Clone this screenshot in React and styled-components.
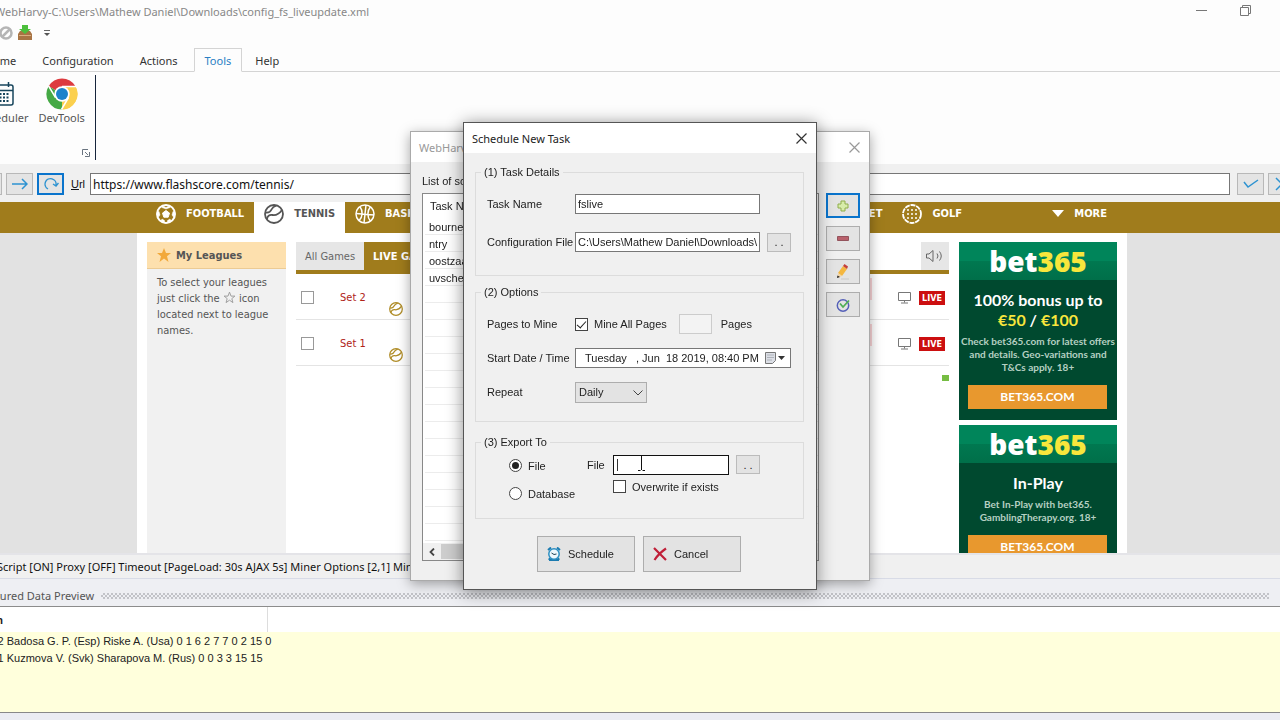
import React from 'react';
import styled, { createGlobalStyle, css } from 'styled-components';

const SEGOE = '"Noto Sans", "Open Sans", sans-serif';
const SYSTEM = '"Liberation Sans", Arial, sans-serif';
const SITE = '"DejaVu Sans Condensed", "DejaVu Sans", sans-serif';
const AD = 'Lato, "Open Sans", sans-serif';

const TABS = ['Home', 'Configuration', 'Actions', 'Tools', 'Help'];
const TASKS = ['bournemouth', 'ntry', 'oostzaan', 'uvscheduled'];
const MATCHES = ['Set 2', 'Set 1'];
const CAPTURED = [
  'Set 2 Badosa G. P. (Esp) Riske A. (Usa) 0 1 6 2 7 7 0 2 15 0',
  'Set 1 Kuzmova V. (Svk) Sharapova M. (Rus) 0 0 3 3 15 15',
];

const CloseIcon = ({ color }) => (
  <svg width="11" height="11" viewBox="0 0 11 11">
    <path d="M.5.5l10 10M10.500.5l-10 10" stroke={color} strokeWidth="1.200" fill="none" />
  </svg>
);

const TennisIcon = ({ size }) => (
  <svg width={size} height={size} viewBox="0 0 20 20" fill="none" stroke="currentColor" strokeWidth="1.800">
    <circle cx="10" cy="10" r="9" />
    <path d="M1.500 8.500C4.500 9 6.500 7.800 7.500 5.500S9.500 2.500 12.500 1.500" />
    <path d="M3 15.500c0-3.500 2.500-5 5.500-4.500 4.500.7 7-1.500 9.500-5" />
  </svg>
);

const FootballIcon = () => (
  <svg width="20" height="20" viewBox="0 0 20 20" fill="none" stroke="currentColor">
    <circle cx="10" cy="10" r="9" strokeWidth="2" />
    <path d="M10 6.500l3.500 2.600-1.300 4.100H7.800L6.500 9.100z" fill="currentColor" />
    <path d="M6 1.500L10 3.600l4-2.100v2L10 5 6 3.500zM1 8l2-.5 1 3.500-1.500 2zM19 8l-2-.5-1 3.500 1.500 2zM5 17l1-2 2.500 1.500V19zM15 17l-1-2-2.500 1.500V19z" fill="currentColor" strokeWidth=".5" />
  </svg>
);

const BasketIcon = () => (
  <svg width="20" height="20" viewBox="0 0 20 20" fill="none" stroke="currentColor" strokeWidth="1.500">
    <circle cx="10" cy="10" r="9" />
    <path d="M11 1L9 19M1 9.500l18 1.500M5 2.800c3 4 3 10-1 14M15.500 2.800c-3.500 4-3.500 10.500 0 14.400" />
  </svg>
);

const GolfIcon = () => (
  <svg width="20" height="20" viewBox="0 0 20 20">
    <circle cx="10" cy="10" r="9" fill="none" stroke="currentColor" strokeWidth="1.800" strokeDasharray="5 .8" />
    {[6, 10, 14].map(y => [6, 10, 14].map(x => (
      <circle key={`${x}-${y}`} cx={x} cy={y} r="1" fill="currentColor" />
    )))}
  </svg>
);

const ChromeIcon = () => (
  <svg width="32" height="32" viewBox="0 0 32 32">
    <path d="M16 16L2.600 8.200A15.500 15.500 0 0 1 29.400 8.200z" fill="#dd3b3f" />
    <path d="M16 16L29.400 8.200A15.500 15.500 0 0 1 16 31.500z" fill="#fbd04e" />
    <path d="M16 16V31.500A15.500 15.500 0 0 1 2.600 8.200z" fill="#45a945" />
    <path d="M16 8.500h13.500A15.500 15.500 0 0 1 16 31.500l6.500-12z" fill="#fbd04e" />
    <path d="M16 8.500h14M9.500 19.500L2.500 7.800M22.500 19.500L15.500 31.500" stroke="#fff" strokeWidth="1.500" />
    <circle cx="16" cy="16" r="7.700" fill="#fff" />
    <circle cx="16" cy="16" r="6" fill="#1b82cb" />
  </svg>
);

const CalendarIcon = () => (
  <svg width="22" height="24" viewBox="0 0 22 24" fill="none" stroke="#17455c" strokeWidth="1.500">
    <rect x="1" y="3" width="20" height="20" rx="2" />
    <path d="M1 8.500h20M5.500 0v5M16.500 0v5" />
    <path d="M4 12h14M4 15.500h14M4 19h14" strokeWidth="2" strokeDasharray="2 1.500" />
  </svg>
);

const Ad = ({ title, children }) => (
  <AdCard>
    <AdLogo>bet<em>365</em></AdLogo>
    <AdTitle>{title}</AdTitle>
    <AdText>{children}</AdText>
    <AdLink href="#bet">BET365.COM</AdLink>
  </AdCard>
);

class App extends React.Component {
  constructor(props) {
    super(props);

    this.state = {
      taskName: 'fslive',
      config: 'C:\\Users\\Mathew Daniel\\Downloads\\',
      date: 'Tuesday   , Jun  18 2019, 08:40 PM',
      mineAll: true,
      repeat: 'Daily',
      target: 'file',
      file: '',
      overwrite: false,
    };

    this.onChange = this.onChange.bind(this);
  }

  onChange(e) {
    const { name, type, checked, value } = e.target;
    this.setState({ [name]: type === 'checkbox' ? checked : value });
  }

  renderRibbon() {
    return (
      <>
        <TitleBar>
          <span>WebHarvy-C:\Users\Mathew Daniel\Downloads\config_fs_liveupdate.xml</span>
          <WindowButtons>
            <button aria-label="Minimize">
              <svg width="11" height="11"><path d="M0 5.500h11" stroke="#777" /></svg>
            </button>
            <button aria-label="Restore">
              <svg width="11" height="11" fill="none" stroke="#777">
                <path d="M.5 2.500h8v8h-8zM2.500 2.500v-2h8v8h-2" />
              </svg>
            </button>
          </WindowButtons>
        </TitleBar>
        <QuickAccess>
          <button aria-label="Stop">
            <svg width="14" height="14" fill="none">
              <circle cx="7" cy="7" r="5.500" stroke="#b5b5b5" strokeWidth="2.500" />
              <path d="M3.500 10.500l7-7" stroke="#b5b5b5" strokeWidth="2.500" />
            </svg>
          </button>
          <button aria-label="Import">
            <svg width="14" height="16">
              <path d="M2 6h10l2 3v6H0V9z" fill="#a87444" />
              <path d="M1 10h12v1H1z" fill="#d9ae80" />
              <path d="M4 0h6v4h3L7 9 1 4h3z" fill="#4cbf3c" />
            </svg>
          </button>
          <button aria-label="Customize">
            <svg width="6" height="8"><path d="M0 1.500h6" stroke="#666" /><path d="M0 4h6L3 7z" fill="#555" /></svg>
          </button>
        </QuickAccess>
        <Tabs>
          {TABS.map(tab => <Tab key={tab} $active={tab === 'Tools'}>{tab}</Tab>)}
        </Tabs>
        <Ribbon>
          <RibbonGroup>
            <RibbonButton><CalendarIcon />Scheduler</RibbonButton>
            <RibbonButton><ChromeIcon />DevTools</RibbonButton>
            <Launcher>
              <svg width="8" height="8" fill="none" stroke="#6a7480">
                <path d="M.5 6V.5H6M3 3l3 3M7.500 3v4.500H3" />
              </svg>
            </Launcher>
          </RibbonGroup>
        </Ribbon>
      </>
    );
  }

  renderAddress() {
    return (
      <AddressBar>
        <NavButton aria-label="Back" />
        <NavButton aria-label="Forward">
          <svg width="16" height="12" fill="none" stroke="#2e93d1" strokeWidth="1.500"><path d="M0 6h15M10 1l5 5-5 5" /></svg>
        </NavButton>
        <NavButton aria-label="Reload" $focus>
          <svg width="16" height="14" fill="none" stroke="#2e93d1" strokeWidth="1.400">
            <path d="M5 12A5.500 5.500 0 1 1 13 8M10 7l3 2 2.500-3" />
          </svg>
        </NavButton>
        <label htmlFor="url"><u>U</u>rl</label>
        <input id="url" defaultValue="https://www.flashscore.com/tennis/" />
        <NavButton aria-label="Go">
          <svg width="16" height="10" fill="none" stroke="#2e93d1" strokeWidth="1.500"><path d="M1 3l4 5 10-7" /></svg>
        </NavButton>
        <NavButton aria-label="Stop loading">
          <svg width="16" height="14" fill="none" stroke="#2e93d1" strokeWidth="1.500"><path d="M2 1l12 12M14 1L2 13" /></svg>
        </NavButton>
      </AddressBar>
    );
  }

  renderSite() {
    return (
      <Browser>
        <SportBar>
          <SportNav>
            <Sport href="#football"><FootballIcon />FOOTBALL</Sport>
            <Sport href="#tennis" $active><TennisIcon size={20} />TENNIS</Sport>
            <Sport href="#basketball"><BasketIcon />BASKETBALL</Sport>
            <SportGroup>
              <Sport href="#cricket">CRICKET</Sport>
              <Sport href="#golf"><GolfIcon />GOLF</Sport>
              <More href="#more">
                <svg width="12" height="7"><path d="M0 0h12L6 7z" fill="#fff" /></svg>
                MORE
              </More>
            </SportGroup>
          </SportNav>
        </SportBar>
        <Page>
          <Leagues>
            <h2>
              <svg width="14" height="14" viewBox="0 0 14 14"><path d="M7 0l2 5h5l-4 3.300L11.500 14 7 10.500 2.500 14 4 8.300 0 5h5z" fill="#f2a93b" /></svg>
              My Leagues
            </h2>
            <p>
              To select your leagues<br />just click the{' '}
              <svg width="13" height="13" viewBox="0 0 14 14"><path d="M7 1.200l1.600 4.300h4.200L9.500 8.200l1.200 4.300L7 9.900l-3.700 2.600 1.200-4.300L1.200 5.500h4.200z" fill="none" stroke="#999" /></svg>
              {' '}icon<br />located next to league<br />names.
            </p>
          </Leagues>
          <Games>
            <GameTabs>
              <GameTab>All Games</GameTab>
              <GameTab $active>LIVE Games</GameTab>
              <Sound aria-label="Sound">
                <svg width="18" height="12" fill="none" stroke="#666">
                  <path d="M.5 4v4H3l4 3.500V.5L3 4zM11 3.500q2 2.500 0 5M13.500 1.500q3.500 4.500 0 9" />
                </svg>
              </Sound>
            </GameTabs>
            {MATCHES.map(name => (
              <Match key={name}>
                <input type="checkbox" aria-label={name} />
                <span>{name}</span>
                <Serve><TennisIcon size={14} /></Serve>
                <Flash />
                <svg width="14" height="12" fill="none" stroke="#777"><path d="M.5.5h12v8H.5zM6.500 8.500v2M3 11h7" /></svg>
                <Live>LIVE</Live>
              </Match>
            ))}
            <Online />
          </Games>
          <Ads>
            <Ad title={<>100% bonus up to<br /><em>€50</em> / <em>€100</em></>}>
              Check bet365.com for latest offers<br />and details. Geo-variations and<br />T&amp;Cs apply. 18+
            </Ad>
            <Ad title="In-Play">Bet In-Play with bet365.<br />GamblingTherapy.org. 18+</Ad>
          </Ads>
        </Page>
      </Browser>
    );
  }

  renderFooter() {
    return (
      <>
        <Status>Script [ON] Proxy [OFF] Timeout [PageLoad: 30s AJAX 5s] Miner Options [2,1] Miner</Status>
        <Caption>Captured Data Preview<Grip /></Caption>
        <Preview>
          <table>
            <thead><tr><th>Column</th></tr></thead>
            <tbody>{CAPTURED.map(row => <tr key={row}><td>{row}</td></tr>)}</tbody>
          </table>
        </Preview>
      </>
    );
  }

  renderScheduler() {
    return (
      <Scheduler>
        <DialogTitle $muted>WebHarvy Scheduler<button aria-label="Close scheduler"><CloseIcon color="#999" /></button></DialogTitle>
        <SchedulerBody>
          <p>List of scheduled tasks</p>
          <TaskList>
            <header>Task Name</header>
            <TaskRows>{TASKS.map(task => <li key={task}>{task}</li>)}</TaskRows>
            <Scrollbar>
              <svg width="6" height="8" fill="none" stroke="#444" strokeWidth="1.800"><path d="M5 .5L1.500 4 5 7.500" /></svg>
              <i />
            </Scrollbar>
          </TaskList>
          <Tools>
            <ToolButton aria-label="Add" $focus>
              <svg width="12" height="12"><path d="M4 1h4v3h3v4H8v3H4V8H1V4h3z" fill="#d7ecaa" stroke="#8fae4b" /></svg>
            </ToolButton>
            <ToolButton aria-label="Remove">
              <svg width="12" height="5"><path d="M.5.5h11v4H.5z" fill="#b9616c" stroke="#93535c" /></svg>
            </ToolButton>
            <ToolButton aria-label="Edit">
              <svg width="14" height="16">
                <path d="M5 15h8" stroke="#c9c9c9" />
                <path d="M2 9l5-7 4 3-5 7z" fill="#f4b740" />
                <path d="M7 2l1.500-2L12 2.500 11 5z" fill="#c5413c" />
                <path d="M2 9l4 3-4.500 2z" fill="#f2d4a4" /><path d="M1 14l.5-2.500L4 13z" fill="#222" />
              </svg>
            </ToolButton>
            <ToolButton aria-label="Run">
              <svg width="14" height="14" fill="none">
                <circle cx="7" cy="7.500" r="5.700" stroke="#5560b8" strokeWidth="1.500" />
                <path d="M4 5.500l3 3.500 6-6.500" stroke="#4fae55" strokeWidth="1.800" />
              </svg>
            </ToolButton>
          </Tools>
        </SchedulerBody>
      </Scheduler>
    );
  }

  renderNewTask() {
    const { taskName, config, date, mineAll, repeat, target, file, overwrite } = this.state;

    return (
      <NewTask>
        <DialogTitle>Schedule New Task<button aria-label="Close"><CloseIcon color="#333" /></button></DialogTitle>
        <Form onSubmit={e => e.preventDefault()}>
          <Group>
            <legend>(1) Task Details</legend>
            <Rows $gap={18}>
              <Row>
                <label htmlFor="taskName">Task Name</label>
                <TextBox $width={185} id="taskName" name="taskName" value={taskName} onChange={this.onChange} />
              </Row>
              <Row>
                <label htmlFor="config">Configuration File</label>
                <TextBox $width={185} id="config" name="config" value={config} onChange={this.onChange} />
                <Browse type="button" aria-label="Browse configuration">. .</Browse>
              </Row>
            </Rows>
          </Group>
          <Group>
            <legend>(2) Options</legend>
            <Rows $gap={14} $tight>
              <Row>
                <label htmlFor="mineAll">Pages to Mine</label>
                <Check>
                  <input type="checkbox" id="mineAll" name="mineAll" checked={mineAll} onChange={this.onChange} />
                  Mine All Pages
                </Check>
                <TextBox $width={33} id="pages" disabled={mineAll} />
                <PagesLabel htmlFor="pages">Pages</PagesLabel>
              </Row>
              <Row>
                <label htmlFor="date">Start Date / Time</label>
                <DateBox>
                  <input id="date" name="date" value={date} onChange={this.onChange} />
                  <button type="button" aria-label="Pick a date">
                    <svg width="20" height="12">
                      <path d="M.5.5h10v8l-3 3h-7z" fill="#dcdfe6" stroke="#777" />
                      <path d="M2 3h7M2 5.500h7M2 8h5" stroke="#a3a7b0" strokeWidth=".8" />
                      <path d="M13 4h7l-3.500 4z" fill="#333" />
                    </svg>
                  </button>
                </DateBox>
              </Row>
              <Row>
                <label htmlFor="repeat">Repeat</label>
                <SelectBox>
                  <select id="repeat" name="repeat" value={repeat} onChange={this.onChange}>
                    <option>Daily</option>
                    <option>Weekly</option>
                  </select>
                  <svg width="10" height="6" fill="none" stroke="#444"><path d="M.5.5L5 5 9.500.5" /></svg>
                </SelectBox>
              </Row>
            </Rows>
          </Group>
          <Group $spaced>
            <legend>(3) Export To</legend>
            <Export>
              <Targets>
                <Check>
                  <input type="radio" name="target" value="file" checked={target === 'file'} onChange={this.onChange} />
                  File
                </Check>
                <Check>
                  <input type="radio" name="target" value="db" checked={target === 'db'} onChange={this.onChange} />
                  Database
                </Check>
              </Targets>
              <FileLabel htmlFor="file">File</FileLabel>
              <FileField>
                <FileRow>
                  <TextBox $width={116} $focus id="file" name="file" value={file} onChange={this.onChange} />
                  <Browse type="button" aria-label="Browse file">. .</Browse>
                  <Caret />
                  <Pointer width="9" height="16" fill="none" stroke="#111">
                    <path d="M1 .5h2.500M5.500.5H8M4.500 1v14M1 15.500h2.500M5.500 15.500H8" />
                  </Pointer>
                </FileRow>
                <Check>
                  <input type="checkbox" name="overwrite" checked={overwrite} onChange={this.onChange} />
                  Overwrite if exists
                </Check>
              </FileField>
            </Export>
          </Group>
          <Actions>
            <ActionButton>
              <svg width="14" height="14" fill="none">
                <path d="M1 3l3-2.500M13 3L10 .5M2 13h10M3 11l-1 2M11 11l1 2" stroke="#1b7bb0" strokeWidth="2" />
                <circle cx="7" cy="7" r="5.200" fill="#eef8fd" stroke="#2d8fc2" strokeWidth="1.500" />
                <path d="M4.500 6L7 7.500 9.500 7" stroke="#245" />
              </svg>
              Schedule
            </ActionButton>
            <ActionButton type="button">
              <svg width="14" height="14" fill="none" stroke="#c01f38" strokeWidth="2.200"><path d="M1 1l12 12M13 1.500C8 5 4 9 1.500 13" /></svg>
              Cancel
            </ActionButton>
          </Actions>
        </Form>
      </NewTask>
    );
  }

  render() {
    return (
      <>
        <GlobalStyle />
        <Shell>
          {this.renderRibbon()}
          {this.renderAddress()}
          {this.renderSite()}
          {this.renderFooter()}
        </Shell>
        <Overlay>
          {this.renderScheduler()}
          {this.renderNewTask()}
        </Overlay>
      </>
    );
  }
}

export default App;


const GlobalStyle = createGlobalStyle`
  * { box-sizing: border-box; }
  body {
    margin: 0;
    overflow: hidden;
    background: #fdfdfd;
    font: 11px ${SEGOE};
    color: #333;
  }
  button, input, select { font: inherit; color: inherit; margin: 0; border-radius: 0; }
  button { display: flex; align-items: center; justify-content: center; padding: 0; border: 0; background: none; }
  svg { flex: none; display: block; }
  h2, p, ul { margin: 0; padding: 0; }
  em { font-style: normal; }
`;

/* the window hangs 40px over the left edge of the screen */
const Shell = styled.div`
  display: flex;
  flex-direction: column;
  height: 100vh;
  margin-left: -40px;
`;

const TitleBar = styled.div`
  display: flex;
  justify-content: space-between;
  align-items: center;
  height: 24px;
  padding: 0 29px 2px 35px;
  color: #888;
  white-space: nowrap;
`;

const WindowButtons = styled.div`
  display: flex;
  gap: 33px;
  padding-bottom: 2px;
`;

const QuickAccess = styled.div`
  display: flex;
  align-items: center;
  height: 24px;
  padding: 0 0 6px 39px;
  gap: 12px;

  button:first-child { margin-right: -7px; }
`;

const Tabs = styled.div`
  display: flex;
  height: 24px;
  padding-left: 12px;
  border-bottom: 1px solid #d4d4d4;
`;

const Tab = styled.button`
  height: 24px;
  padding: 1px 12px 0;
  border: 1px solid transparent;

  ${props => props.$active && css`
    border-color: #d4d4d4 #d4d4d4 #fdfdfd;
    background: #fdfdfd;
    color: #2a7fc4;
    margin-left: 3px;
    padding: 1px 10px 0;
  `}
`;

const Ribbon = styled.div`
  height: 92px;
  padding: 3px 0 4px 17px;
`;

const RibbonGroup = styled.div`
  display: flex;
  gap: 10px;
  width: 119px;
  height: 85px;
  border-right: 1px solid #16253c;
  position: relative;
`;

const RibbonButton = styled.button`
  flex-direction: column;
  justify-content: space-between;
  height: 50px;
  color: #555;
  padding-top: 2px;

  svg { margin: auto 0; }
`;

const Launcher = styled.span`
  position: absolute;
  right: 5px;
  bottom: 3px;
`;

const AddressBar = styled.div`
  display: flex;
  align-items: center;
  height: 38px;
  padding: 2px 0 0 15px;
  gap: 4px;
  background: #f0f0f0;
  margin-right: -15px;

  label { margin-left: 3px; width: 15px; font: 11px ${SYSTEM}; color: #111; }
  input {
    flex: 1;
    height: 22px;
    margin-right: 3px;
    padding: 0 2px;
    border: 1px solid #777;
    background: #fff;
    color: #111;
    font-size: 12px;
  }
`;

const NavButton = styled.button`
  width: 27px;
  height: 22px;
  border: ${props => (props.$focus ? '2px solid #0a74cc' : '1px solid #b8b8b8')};
  background: #e4e4e4;
`;

const Browser = styled.div`
  display: flex;
  flex-direction: column;
  flex: 1;
  min-height: 0;
  overflow: hidden;
  padding: 0 16px 0 40px;
  background: #e2e2e2;
  font: 11px ${SITE};
`;

const SportBar = styled.div`
  flex: none;
  margin: 0 -16px 0 -40px;
  padding: 0 16px 0 40px;
  background: #a07c1c;
`;

const SportNav = styled.nav`
  display: flex;
  width: 990px;
  height: 31px;
  margin: 0 auto;
  padding-left: 9px;
`;

const Sport = styled.a`
  display: flex;
  align-items: center;
  gap: 10px;
  height: 31px;
  padding: 0 10px 8px;
  color: ${props => (props.$active ? '#555' : '#fff')};
  background: ${props => (props.$active ? '#fff' : 'none')};
  font-weight: bold;
  text-decoration: none;
`;

const SportGroup = styled.div`
  display: flex;
  margin-left: auto;
`;

const More = styled(Sport)`
  width: 155px;
  padding-right: 20px;
  justify-content: flex-end;
`;

const Page = styled.div`
  display: grid;
  grid-template-columns: 139px 1fr 158px;
  gap: 10px;
  flex: 1;
  min-height: 0;
  width: 990px;
  margin: 0 auto;
  padding: 9px 10px 0;
  background: #fff;
`;

const Leagues = styled.section`
  background: #f1f1f1;
  color: #555;

  h2 {
    display: flex;
    align-items: center;
    gap: 5px;
    height: 27px;
    padding-left: 10px;
    border-bottom: 1px solid #eccb94;
    background: #fde0ae;
    font-size: 11px;
  }
  p { padding: 6px 0 0 10px; line-height: 16px; white-space: nowrap; }
  p svg { display: inline-block; vertical-align: -2px; }
`;

const Games = styled.section`
  display: flex;
  flex-direction: column;
`;

const GameTabs = styled.div`
  display: flex;
  height: 32px;
  border-bottom: 4px solid #a07c1c;
`;

const GameTab = styled.button`
  height: 28px;
  padding: 0 9px;
  background: ${props => (props.$active ? '#a07c1c' : '#e6e6e6')};
  color: ${props => (props.$active ? '#fff' : '#666')};
  font-weight: ${props => (props.$active ? 'bold' : 'normal')};
  text-transform: ${props => (props.$active ? 'uppercase' : 'none')};
`;

const Sound = styled.button`
  width: 28px;
  margin-left: auto;
  background: #e6e6e6;
`;

const Match = styled.div`
  display: flex;
  align-items: center;
  height: 46px;
  padding: 2px 4px 0 5px;
  border-bottom: 1px solid #e4e4e4;
  color: #b02318;

  input { appearance: none; width: 13px; height: 13px; border: 1px solid #999; background: #fff; margin-right: 26px; }
`;

const Serve = styled.span`
  align-self: flex-end;
  margin: 0 0 3px 23px;
  color: #b08d28;
`;

const Flash = styled.i`
  width: 20px;
  height: 22px;
  margin: 0 26px 18px auto;
  background: #fbd5d8;
`;

const Live = styled.b`
  margin-left: 7px;
  padding: 0 3px;
  line-height: 14px;
  background: #cc0f10;
  color: #fff;
  font-size: 9px;
`;

const Online = styled.i`
  width: 7px;
  height: 6px;
  margin: 9px 0 0 auto;
  background: #76bd43;
`;

const Ads = styled.aside`
  display: flex;
  flex-direction: column;
  gap: 5px;
  font-family: ${AD};
`;

const AdCard = styled.div`
  display: flex;
  flex-direction: column;
  flex: none;
  gap: 5px;
  padding-bottom: 11px;
  background: #00492f;
  color: #fff;
  text-align: center;
  font-weight: bold;

  em { color: #f8e63c; }
`;

const AdLogo = styled.div`
  height: 38px;
  margin-bottom: 5px;
  background: linear-gradient(#00855a 50%, #007850 50%, #006f49);
  font: 800 28px/38px "Open Sans", sans-serif;
`;

const AdTitle = styled.div`
  font-size: 16px;
  line-height: 20px;
  white-space: nowrap;
`;

const AdText = styled.div`
  color: #b5d0c2;
  font-size: 10px;
  line-height: 13px;
  white-space: nowrap;
`;

const AdLink = styled.a`
  margin: 6px 10px 0 9px;
  background: #e8982e;
  color: #fff;
  font-size: 12px;
  line-height: 24px;
  text-decoration: none;
`;

const Status = styled.div`
  height: 25px;
  padding: 0 0 0 37px;
  border-top: 2px solid #e4e4e8;
  background: #f0f0f0;
  color: #111;
  line-height: 24px;
`;

const Caption = styled.div`
  display: flex;
  align-items: center;
  gap: 7px;
  height: 29px;
  padding: 6px 11px 0 16px;
  border-top: 1px solid #d8dbe6;
  border-bottom: 1px solid #8c8c8c;
  background: #eeeff3;
  color: #555;
`;

const Grip = styled.i`
  flex: 1;
  height: 6px;
  background: conic-gradient(#c2c3c8 25%, transparent 0 50%, #c2c3c8 0 75%, transparent 0) 0 0 / 4px 4px;
`;

const Preview = styled.div`
  height: 113px;
  background: #ffffdc;
  border-bottom: 7px solid #ebecf2;
  box-shadow: inset 0 -1px #888;
  font: 11px ${SYSTEM};

  table { width: 100%; border-collapse: collapse; color: #222; }
  thead { background: linear-gradient(90deg, transparent 307px, #ddd 307px 308px, transparent 308px), #fff; }
  th { height: 25px; padding: 0 0 0 2px; text-align: left; }
  td { height: 17px; padding: 0 0 0 18px; }
`;

/* both dialogs share one centred cell */
const Overlay = styled.div`
  position: fixed;
  inset: 0;
  display: grid;
  place-items: center;
  padding-bottom: 8px;

  > * { grid-area: 1 / 1; }
`;

const Dialog = styled.section`
  background: #f0f0f0;
  color: #222;
  font: 11px ${SYSTEM};
`;

const DialogTitle = styled.header`
  display: flex;
  align-items: center;
  justify-content: space-between;
  height: 30px;
  padding: 0 9px 0 8px;
  background: #fff;
  color: ${props => (props.$muted ? '#999' : '#222')};
  font: 11px ${SEGOE};
`;

const Scheduler = styled(Dialog)`
  width: 460px;
  border: 1px solid #aaa;
  box-shadow: 0 3px 12px rgba(0, 0, 0, .35);
`;

const SchedulerBody = styled.div`
  display: grid;
  grid-template-columns: 397px 34px;
  grid-template-rows: 17px 368px;
  column-gap: 7px;
  row-gap: 3px;
  padding: 11px 0 19px 11px;

  p { grid-column: 1 / 3; line-height: 17px; }
`;

const TaskList = styled.div`
  display: flex;
  flex-direction: column;
  border: 1px solid #888;
  background: #fff;

  header { height: 24px; padding-left: 7px; line-height: 25px; }
`;

const TaskRows = styled.ul`
  flex: 1;
  margin-left: 2px;
  list-style: none;
  background: repeating-linear-gradient(#fff 0 16px, #ececec 16px 17px);

  li { height: 17px; padding-left: 4px; line-height: 18px; }
`;

const Scrollbar = styled.div`
  display: flex;
  align-items: center;
  gap: 6px;
  height: 17px;
  padding-left: 6px;
  background: #f0f0f0;

  i { width: 220px; height: 15px; background: #cdcdcd; }
`;

const Tools = styled.div`
  display: flex;
  flex-direction: column;
  gap: 8px;
`;

const ToolButton = styled.button`
  height: 25px;
  border: ${props => (props.$focus ? '2px solid #0a74cc' : '1px solid #adadad')};
  background: #e3e3e3;
`;

const NewTask = styled(Dialog)`
  width: 354px;
  border: 1px solid #555;
  box-shadow: 0 2px 16px rgba(0, 0, 0, .45);
`;

const Form = styled.form`
  display: flex;
  flex-direction: column;
  gap: 8px;
  padding: 11px 12px 17px 11px;
`;

const Group = styled.fieldset`
  margin: ${props => (props.$spaced ? '4px 0 0' : '0')};
  padding: 0 0 18px 11px;
  border: 1px solid #dcdcdc;

  legend { margin-left: -6px; padding: 0 3px; line-height: 16px; }
`;

const Rows = styled.div`
  display: flex;
  flex-direction: column;
  gap: ${props => props.$gap}px;
  padding: 14px 0 ${props => (props.$tight ? '1px' : '5px')};
`;

const Row = styled.div`
  display: flex;
  align-items: center;
  height: 20px;

  > label:first-child { width: 88px; white-space: nowrap; }
`;

const TextBox = styled.input`
  width: ${props => props.$width}px;
  height: 20px;
  padding: 0 2px;
  border: 1px solid ${props => (props.$focus ? '#111' : '#777')};
  background: #fff;

  &:disabled { background: #f3f3f3; border-color: #ccc; }
`;

const Browse = styled.button`
  width: 24px;
  height: 19px;
  margin-left: 7px;
  border: 1px solid #bbb;
  background: #e3e3e3;
`;

const Check = styled.label`
  display: flex;
  align-items: center;
  gap: 6px;
  white-space: nowrap;

  input {
    appearance: none;
    display: grid;
    place-items: center;
    width: 13px;
    height: 13px;
    border: 1px solid #444;
    background: #fff;
  }
  input[type='radio'] { border-radius: 50%; }
  input[type='radio']:checked::after { content: ''; width: 7px; height: 7px; border-radius: 50%; background: #222; }
  input[type='checkbox']:checked::after {
    content: '';
    width: 4px;
    height: 8px;
    margin-bottom: 2px;
    border: solid #222;
    border-width: 0 1px 1px 0;
    transform: rotate(42deg);
  }

  & + input { margin-left: 12px; }
`;

const PagesLabel = styled.label`
  margin-left: 9px;
`;

const DateBox = styled.div`
  display: flex;
  align-items: center;
  width: 216px;
  height: 20px;
  padding: 0 5px 0 9px;
  border: 1px solid #777;
  background: #fff;

  input { flex: 1; min-width: 0; padding: 0; border: 0; background: none; }
`;

const SelectBox = styled.div`
  position: relative;

  select {
    appearance: none;
    display: block;
    width: 72px;
    height: 21px;
    padding: 0 3px;
    border: 1px solid #adadad;
    background: #e3e3e3;
  }
  svg { position: absolute; right: 4px; top: 8px; pointer-events: none; }
`;

const Export = styled.div`
  display: flex;
  align-items: flex-start;
  padding: 5px 0 0 22px;
`;

const Targets = styled.div`
  display: flex;
  flex-direction: column;
  gap: 15px;
  width: 78px;
  padding-top: 4px;
`;

const FileLabel = styled.label`
  width: 26px;
  line-height: 20px;
`;

const FileField = styled.div`
  display: flex;
  flex-direction: column;
  gap: 5px;
`;

const FileRow = styled.div`
  display: flex;
  position: relative;
`;

const Caret = styled.i`
  position: absolute;
  left: 4px;
  top: 4px;
  width: 1px;
  height: 12px;
  background: #333;
`;

const Pointer = styled.svg`
  position: absolute;
  left: 24px;
  top: 0;
`;

const Actions = styled.div`
  display: flex;
  gap: 8px;
  margin-top: 9px;
  padding-left: 62px;
`;

const ActionButton = styled.button`
  gap: 7px;
  justify-content: flex-start;
  width: 98px;
  height: 36px;
  padding-left: 9px;
  border: 1px solid #adadad;
  background: #e3e3e3;
`;
